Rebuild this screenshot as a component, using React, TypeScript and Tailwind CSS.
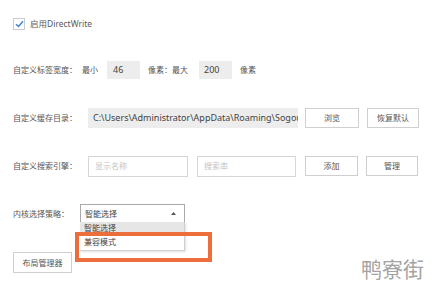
export default function App() {
  const font = { fontFamily: '"Noto Sans", "Noto Sans CJK SC", sans-serif' };
  const btn =
    "h-[20px] flex items-center justify-center bg-white border border-[#cfcfcf] text-[8px] text-[#555]";

  return (
    <div
      className="relative w-[432px] h-[285px] bg-white overflow-hidden text-[#555] text-[8px]"
      style={font}
    >
      <div className="flex flex-col pl-[13px]">
        {/* DirectWrite */}
        <div className="mt-[18px] h-[12px] flex items-center">
          <div className="w-[12px] h-[12px] border border-[#c8ccd2] bg-white flex items-center justify-center">
            <svg width="9" height="8" viewBox="0 0 9 8">
              <path d="M1 4.2 L3.5 6.5 L8 1.2" fill="none" stroke="#3d7fd6" strokeWidth="1.4" />
            </svg>
          </div>
          <span className="ml-[5px] text-[8.5px] text-[#5a5a5a]">启用DirectWrite</span>
        </div>

        {/* tab width */}
        <div className="mt-[31px] h-[18px] flex items-center">
          <span className="w-[69px]">自定义标签宽度：</span>
          <span className="w-[25px]">最小</span>
          <div className="w-[33px] h-[18px] bg-[#ededed] flex items-center pl-[6px] text-[9px] text-[#444]">46</div>
          <span className="ml-[8px] w-[51px]">像素：最大</span>
          <div className="w-[33px] h-[18px] bg-[#ededed] flex items-center pl-[5px] text-[9px] text-[#444]">200</div>
          <span className="ml-[8px]">像素</span>
        </div>

        {/* cache dir */}
        <div className="mt-[29px] h-[20px] flex items-center">
          <span className="w-[75px]">自定义缓存目录：</span>
          <div className="w-[210px] h-[20px] bg-[#ededed] flex items-center pl-[5px] overflow-hidden whitespace-nowrap text-[9px] text-[#444]">
            C:\Users\Administrator\AppData\Roaming\Sogou
          </div>
          <div className={`${btn} ml-[7px] w-[54px]`}>浏览</div>
          <div className={`${btn} ml-[8px] w-[52px]`}>恢复默认</div>
        </div>

        {/* search engine */}
        <div className="mt-[28px] h-[20px] flex items-center">
          <span className="w-[75px]">自定义搜索引擎：</span>
          <div className="w-[100px] h-[21px] border border-[#d6d6d6] flex items-center pl-[6px] text-[#c4c4c4]">显示名称</div>
          <div className="ml-[9px] w-[99px] h-[21px] border border-[#d6d6d6] flex items-center pl-[6px] text-[#c4c4c4]">搜索串</div>
          <div className={`${btn} ml-[9px] w-[53px]`}>添加</div>
          <div className={`${btn} ml-[8px] w-[52px]`}>管理</div>
        </div>

        {/* kernel */}
        <div className="mt-[28px] h-[19px] flex items-center">
          <span className="w-[67px]">内核选择策略：</span>
          <div className="w-[105px] h-[19px] border border-[#a9a9a9] flex items-center justify-between pl-[4px] pr-[8px] text-[#444]">
            <span>智能选择</span>
            <svg width="5" height="3" viewBox="0 0 5 3">
              <path d="M0 3 L2.5 0 L5 3 Z" fill="#555" />
            </svg>
          </div>
        </div>

        {/* layout manager */}
        <div className="mt-[29px]">
          <div className={`${btn} w-[59px] h-[21px]`}>布局管理器</div>
        </div>
      </div>

      {/* open dropdown list */}
      <div className="absolute left-[80px] top-[222px] w-[105px] h-[29px] bg-white border-r border-b border-[#d0d0d0] shadow-[1px_1px_2px_rgba(0,0,0,0.12)] flex flex-col text-[#444]">
        <div className="h-[11px] bg-[#e6e6e6] overflow-hidden flex items-end pl-[4px] leading-[10px]">智能选择</div>
        <div className="flex-1 flex items-center pl-[4px]">兼容模式</div>
      </div>

      {/* highlight box */}
      <div className="absolute left-[75px] top-[232px] w-[137px] h-[30px] border-[4px] border-[#eb6e3c]" />

      {/* watermark */}
      <div
        className="absolute left-[361px] top-[255px] text-[21px] leading-[26px] text-[#a3a3a3]"
        style={{ fontFamily: '"Noto Sans CJK SC", sans-serif' }}
      >
        鸭寮街
      </div>
    </div>
  );
}
